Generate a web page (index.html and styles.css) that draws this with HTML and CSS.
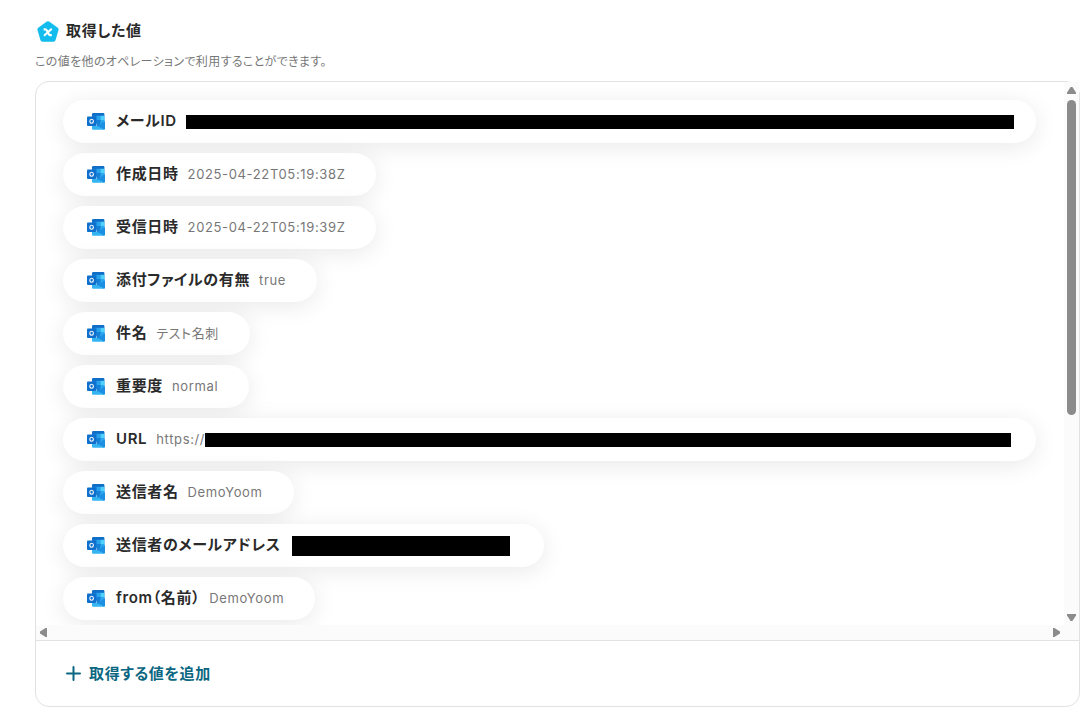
FILE: index.html
```html
<!DOCTYPE html>
<html lang="ja">
<head>
  <meta charset="UTF-8">
  <title>取得した値</title>
  <link rel="stylesheet" href="styles.css">
</head>
<body>
  <svg class="defs" width="0" height="0" aria-hidden="true">
    <symbol id="outlook" viewBox="0 0 18 17">
      <path fill="#0f6fc6" d="M5 1.2Q5 0 6.200 0H16.400Q17.400 0 17.400 1.200V10H5z"/>
      <path fill="#1480d8" d="M5 2.800h5v8H5z"/>
      <path fill="#29a3ec" d="M9.500 2.800h4.200v4.200H9.500z"/>
      <path fill="#4fd0fb" d="M13.500 2.800h3.900v4.200h-3.900z"/>
      <path fill="#1580d6" d="M9.500 7h4.200v6H9.500z"/>
      <path fill="#2aa9f0" d="M13.500 7h3.900v4h-3.900z"/>
      <path fill="#1c8fe2" d="M18 8.200V15.600Q18 16.800 16.800 16.800L9 13.400z"/>
      <path fill="#35b4f2" d="M5 13h5l7.500 3.500Q17.200 16.800 16.800 16.800H6.200Q5 16.800 5 15.600z"/>
      <rect fill="#0f6fcc" y="3.400" width="9.200" height="9.600" rx="0.900"/>
      <ellipse cx="4.600" cy="8.200" rx="1.800" ry="2" fill="none" stroke="#fff" stroke-width="1.100"/>
    </symbol>
  </svg>

  <main class="output">
    <header class="output-head">
      <h2>
        <svg width="22" height="21" viewBox="0 0 22 21" aria-hidden="true">
          <path fill="#12bdee" stroke="#12bdee" stroke-width="4" stroke-linejoin="round" d="M11 2.200L19.600 8.400 16.600 18.800H5.400L2.400 8.400z"/>
          <path fill="none" stroke="#fff" stroke-width="2.200" d="M6.600 8.400h1.600Q9.200 8.400 10 9.800l1.400 2.800Q12.200 14.200 13.200 14.200h1.600"/>
          <path fill="none" stroke="#fff" stroke-width="2" d="M14.800 7.800L7 14.800"/>
        </svg>
        取得した値
      </h2>
      <p>この値を他のオペレーションで利用することができます。</p>
    </header>

    <section class="panel">
      <div class="scroll-area">
        <ul class="values">
          <li class="pill wide"><svg class="icon"><use href="#outlook"/></svg><span class="label">メールID</span><span class="mask"></span></li>
          <li class="pill"><svg class="icon"><use href="#outlook"/></svg><span class="label">作成日時</span><span class="value">2025-04-22T05:19:38Z</span></li>
          <li class="pill"><svg class="icon"><use href="#outlook"/></svg><span class="label">受信日時</span><span class="value">2025-04-22T05:19:39Z</span></li>
          <li class="pill"><svg class="icon"><use href="#outlook"/></svg><span class="label">添付ファイルの有無</span><span class="value">true</span></li>
          <li class="pill"><svg class="icon"><use href="#outlook"/></svg><span class="label">件名</span><span class="value">テスト名刺</span></li>
          <li class="pill"><svg class="icon"><use href="#outlook"/></svg><span class="label">重要度</span><span class="value">normal</span></li>
          <li class="pill wide url"><svg class="icon"><use href="#outlook"/></svg><span class="label">URL</span><span class="value">https://</span><span class="mask"></span></li>
          <li class="pill"><svg class="icon"><use href="#outlook"/></svg><span class="label">送信者名</span><span class="value">DemoYoom</span></li>
          <li class="pill address"><svg class="icon"><use href="#outlook"/></svg><span class="label">送信者のメールアドレス</span><span class="mask"></span></li>
          <li class="pill"><svg class="icon"><use href="#outlook"/></svg><span class="label">from（名前）</span><span class="value">DemoYoom</span></li>
        </ul>
        <div class="bar bar-y">
          <span class="arrow up"></span>
          <span class="thumb"></span>
          <span class="arrow down"></span>
        </div>
        <div class="bar bar-x">
          <span class="arrow left"></span>
          <span class="arrow right"></span>
        </div>
        <div class="bar"></div>
      </div>
      <footer class="panel-foot">
        <button type="button" class="add">
          <svg width="15" height="15" viewBox="0 0 15 15" aria-hidden="true"><path d="M7.500 1v13M1 7.500h13" fill="none" stroke="currentColor" stroke-width="2" stroke-linecap="round"/></svg>
          取得する値を追加
        </button>
      </footer>
    </section>
  </main>
</body>
</html>
```
FILE: styles.css
```css
* { box-sizing: border-box; }

body {
  margin: 0;
  background: #fff;
  color: #2a2a2a;
  font-family: Inter, "Noto Sans CJK JP", sans-serif;
  font-feature-settings: "palt";
  letter-spacing: 0.04em;
}

.defs { position: absolute; }

.output { padding: 20px 9px 13px 35px; }

h2 {
  display: flex;
  align-items: center;
  gap: 7px;
  margin: 0;
  padding-left: 2px;
  font-size: 15px;
  line-height: 22px;
  font-weight: 600;
}

.output-head p {
  margin: 11px 0 10px;
  font-size: 12px;
  line-height: 18px;
  color: #777;
  letter-spacing: 0.03em;
}

.panel {
  border: 1px solid #e2e2e2;
  border-radius: 14px;
}

.scroll-area {
  display: grid;
  grid-template: 543px 15px / 1fr 15px;
  border-bottom: 1px solid #e2e2e2;
}

.values {
  display: flex;
  flex-direction: column;
  align-items: flex-start;
  gap: 10px;
  margin: 0;
  padding: 18px 28px 18px 27px;
  overflow: hidden;
  border-top-left-radius: 13px;
  list-style: none;
}

.pill {
  display: flex;
  align-items: center;
  flex-shrink: 0;
  height: 43px;
  padding: 0 31px 0 24px;
  border-radius: 22px;
  background: #fff;
  box-shadow: 0 4px 24px rgba(0, 0, 0, 0.09);
  white-space: nowrap;
}

.pill.wide {
  align-self: stretch;
  padding-right: 22px;
}

.pill.url { padding-right: 25px; }

.pill.address { padding-right: 34px; }

.icon {
  width: 18px;
  height: 17px;
  margin-right: 11px;
}

.label {
  margin-right: 9px;
  padding-bottom: 2px;
  font-size: 15px;
  line-height: 22px;
  font-weight: 600;
}

.value {
  padding-bottom: 2px;
  font-size: 13px;
  line-height: 20px;
  color: #777;
}

.mask {
  flex: 1;
  height: 14px;
  background: #000;
}

.address .mask {
  flex: none;
  width: 218px;
  height: 20px;
  margin-left: 2px;
}

.bar {
  display: flex;
  align-items: center;
  background: #fbfbfb;
}

.bar-y {
  flex-direction: column;
  padding: 5px 0 4px;
}

.bar-x {
  justify-content: space-between;
  padding: 0 4px;
}

.thumb {
  width: 9px;
  height: 315px;
  margin: 6px 0 auto;
  border-radius: 5px;
  background: #8b8b8b;
}

.arrow {
  width: 9px;
  height: 7px;
  background: #8b8b8b;
}

.up { clip-path: polygon(40% 0, 60% 0, 100% 80%, 100% 100%, 0 100%, 0 80%); }
.down { clip-path: polygon(0 0, 100% 0, 100% 20%, 60% 100%, 40% 100%, 0 20%); }

.left,
.right {
  width: 7px;
  height: 9px;
}

.left { clip-path: polygon(0 40%, 80% 0, 100% 0, 100% 100%, 80% 100%, 0 60%); }
.right { clip-path: polygon(0 0, 20% 0, 100% 40%, 100% 60%, 20% 100%, 0 100%); }

.panel-foot { padding: 21px 30px; }

.add {
  display: flex;
  align-items: center;
  gap: 8px;
  padding: 0;
  border: 0;
  background: none;
  color: #0b6781;
  font: inherit;
  font-size: 15px;
  line-height: 23px;
  font-weight: 600;
  font-feature-settings: inherit;
  letter-spacing: inherit;
  cursor: pointer;
}
```
